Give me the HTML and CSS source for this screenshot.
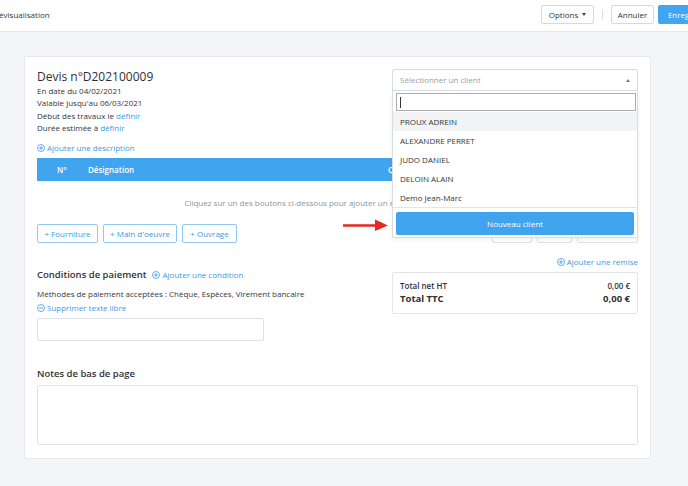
FILE: index.html
```html
<!DOCTYPE html>
<html lang="fr">
<head>
<meta charset="utf-8">
<title>Devis</title>
<link rel="stylesheet" href="styles.css">
</head>
<body>
<header class="topbar">
  <div class="topbar-title">Prévisualisation</div>
  <div class="topbar-actions">
    <button class="btn btn-options">Options <span class="caret"></span></button>
    <span class="vsep"></span>
    <button class="btn btn-cancel">Annuler</button>
    <button class="btn btn-primary">Enregistrer</button>
  </div>
</header>

<main class="page">
  <section class="card">
    <div class="doc-head">
      <div class="doc-info">
        <h1 class="doc-title">Devis n°D202100009</h1>
        <p>En date du 04/02/2021</p>
        <p>Valable jusqu'au 06/03/2021</p>
        <p>Début des travaux le <a class="link">définir</a></p>
        <p>Durée estimée à <a class="link">définir</a></p>
      </div>
      <div class="client-select">
        <div class="select-box"><span>Sélectionner un client</span><span class="caret-up"></span></div>
        <div class="dropdown">
          <div class="search-wrap"><div class="search-input"><span class="cursor"></span></div></div>
          <ul class="options">
            <li class="option active">PROUX ADREIN</li>
            <li class="option">ALEXANDRE PERRET</li>
            <li class="option">JUDO DANIEL</li>
            <li class="option">DELOIN ALAIN</li>
            <li class="option">Demo Jean-Marc</li>
          </ul>
          <div class="dropdown-foot"><button class="btn-new">Nouveau client</button></div>
        </div>
      </div>
    </div>

    <a class="link icon-link add-desc">
      <svg class="ico" viewBox="0 0 8 8"><circle cx="4" cy="4" r="3.5"/><path d="M4 2v4M2 4h4"/></svg>
      Ajouter une description
    </a>

    <div class="table-head">
      <span class="col-num">N°</span>
      <span class="col-des">Désignation</span>
      <span class="col-qty">Qté</span>
    </div>
    <div class="table-empty">Cliquez sur un des boutons ci-dessous pour ajouter un élément à votre document.</div>

    <div class="add-row">
      <div class="btn-group">
        <button class="btn-outline w-fourniture">+ Fourniture</button>
        <button class="btn-outline w-main">+ Main d'oeuvre</button>
        <button class="btn-outline w-ouvrage">+ Ouvrage</button>
      </div>
      <div class="btn-group">
        <button class="btn-outline w-a" aria-label="Titre"></button>
        <button class="btn-outline w-b" aria-label="Texte"></button>
        <button class="btn-outline w-c" aria-label="Saut de page"></button>
      </div>
    </div>

    <div class="bottom-row">
      <div class="conditions">
        <div class="cond-head">
          <h2 class="section-title">Conditions de paiement</h2>
          <a class="link icon-link">
            <svg class="ico" viewBox="0 0 8 8"><circle cx="4" cy="4" r="3.5"/><path d="M4 2v4M2 4h4"/></svg>
            Ajouter une condition
          </a>
        </div>
        <p class="methods">Méthodes de paiement acceptées : Chèque, Espèces, Virement bancaire</p>
        <a class="link icon-link remove-free">
          <svg class="ico" viewBox="0 0 8 8"><circle cx="4" cy="4" r="3.5"/><path d="M2 4h4"/></svg>
          Supprimer texte libre
        </a>
        <div class="free-input"></div>
      </div>
      <div class="totals-col">
        <a class="link icon-link remise">
          <svg class="ico" viewBox="0 0 8 8"><circle cx="4" cy="4" r="3.5"/><path d="M4 2v4M2 4h4"/></svg>
          Ajouter une remise
        </a>
        <div class="totals-box">
          <div class="tot-row tot-ht"><span>Total net HT</span><span>0,00 €</span></div>
          <div class="tot-row tot-ttc"><span>Total TTC</span><span>0,00 €</span></div>
        </div>
      </div>
    </div>

    <div class="notes">
      <h2 class="section-title">Notes de bas de page</h2>
      <div class="notes-area"></div>
    </div>
  </section>
</main>

<div class="annot-arrow">
  <svg width="46" height="12" viewBox="0 0 46 12"><path d="M0 6.5H34" stroke="#e8271d" stroke-width="2.4"/><polygon points="32,0.5 45,6.5 32,12" fill="#e8271d"/></svg>
</div>
</body>
</html>
```

FILE: styles.css
```css
* { box-sizing: border-box; margin: 0; padding: 0; }

html, body { width: 688px; height: 486px; overflow: hidden; }

body {
  position: relative;
  font-family: "Open Sans", "Noto Sans", sans-serif;
  font-size: 8px;
  line-height: 12px;
  color: #33363c;
  background: #f4f5f8;
}

button { font-family: inherit; cursor: pointer; }
ul { list-style: none; }

.link { color: #3b9ae6; text-decoration: none; }
.icon-link { display: flex; align-items: center; gap: 2px; }
.ico { width: 8px; height: 8px; fill: none; stroke: #3b9ae6; stroke-width: 0.8; flex: none; }

/* Top bar */
.topbar {
  height: 32px;
  background: #fff;
  border-bottom: 1px solid #e7e8ec;
  display: flex;
  justify-content: space-between;
  align-items: flex-start;
}
.topbar-title { margin: 9px 0 0 -9px; color: #333; }
.topbar-actions { display: flex; align-items: center; margin: 5px -31px 0 0; }
.btn {
  height: 19px;
  font-size: 8px;
  border-radius: 2px;
  border: 1px solid #d6d9df;
  background: #fff;
  color: #333;
  display: inline-flex;
  align-items: center;
  justify-content: center;
  gap: 4px;
}
.btn-options { width: 53px; }
.btn-cancel { width: 43px; }
.btn-primary { width: 61px; margin-left: 4px; background: #42a5f0; border-color: #42a5f0; color: #fff; }
.caret { width: 0; height: 0; border-left: 2.5px solid transparent; border-right: 2.5px solid transparent; border-top: 3px solid #444; }
.vsep { width: 1px; height: 9px; background: #d9dce1; margin: 0 8px; }

/* Page */
.page { padding: 24px 37px 0 24px; }
.card {
  background: #fff;
  border: 1px solid #e6e8ec;
  border-radius: 2px;
  padding: 12px 12px 13px 12px;
}

.doc-head { display: flex; justify-content: space-between; align-items: flex-start; }
.doc-title { font-size: 12px; line-height: 16px; font-weight: 400; color: #2f3136; }
.doc-info p { line-height: 12.3px; }

.client-select { position: relative; width: 246px; z-index: 2; }
.select-box {
  height: 22px;
  border: 1px solid #d9dce1;
  border-radius: 2px;
  padding: 0 7px;
  display: flex;
  align-items: center;
  justify-content: space-between;
  color: #9a9da4;
}
.caret-up { width: 0; height: 0; border-left: 2px solid transparent; border-right: 2px solid transparent; border-bottom: 3px solid #777; }

.dropdown {
  position: absolute;
  top: 21px;
  left: 0;
  width: 246px;
  background: #fff;
  border: 1px solid #d9dce1;
  box-shadow: 0 2px 4px rgba(0, 0, 0, 0.06);
}
.search-wrap { padding: 2px 1px 0 3px; }
.search-input { height: 18px; border: 1px solid #a9acb2; display: flex; align-items: center; padding-left: 3px; }
.cursor { width: 1px; height: 11px; background: #333; }
.options { margin-top: 1px; }
.option { height: 19px; line-height: 19px; padding-left: 7px; color: #33363c; }
.option.active { background: #f2f3f5; }
.dropdown-foot { border-top: 1px solid #e3e5e9; padding: 4px 3px 2px 3px; }
.btn-new {
  width: 100%;
  height: 23px;
  border: 0;
  border-radius: 2px;
  background: #40a3ee;
  color: #fff;
  font-size: 8px;
}

.add-desc { margin-top: 8px; }

.table-head {
  margin-top: 4px;
  height: 23px;
  background: #40a4ef;
  color: #fff;
  font-weight: 600;
  display: flex;
  align-items: center;
  padding-left: 20px;
}
.col-num { width: 31px; }
.col-des { width: 300px; }

.table-empty { height: 43px; padding-top: 16px; text-align: center; color: #8e93a0; }

.add-row { display: flex; justify-content: space-between; }
.btn-group { display: flex; gap: 5px; }
.btn-outline {
  height: 19px;
  font-size: 8px;
  padding: 0;
  border: 1px solid #90c8f4;
  border-radius: 2px;
  background: #fff;
  color: #3b9ae6;
}
.w-fourniture { width: 61px; }
.w-main { width: 74px; }
.w-ouvrage { width: 55px; }
.w-a { width: 40px; border-color: #dfe1e6; }
.w-b { width: 35px; border-color: #dfe1e6; }
.w-c { width: 61px; border-color: #dfe1e6; }

.bottom-row { margin-top: 13px; display: flex; justify-content: space-between; align-items: flex-start; }
.conditions { padding-top: 12px; }
.cond-head { display: flex; align-items: center; gap: 6px; }
.section-title { font-size: 9.5px; line-height: 14px; font-weight: 600; color: #333; }
.methods { margin-top: 6px; }
.remove-free { margin-top: 2px; }
.free-input { margin-top: 4px; width: 227px; height: 23px; border: 1px solid #dfe1e6; border-radius: 2px; }

.totals-col { width: 246px; }
.remise { justify-content: flex-end; }
.totals-box { margin-top: 4px; border: 1px solid #e3e5e9; border-radius: 2px; padding: 7px 7px; }
.tot-row { display: flex; justify-content: space-between; color: #2f3136; }
.tot-ht { line-height: 12px; font-weight: 600; }
.tot-ttc { line-height: 14px; font-size: 9.5px; font-weight: 700; }

.notes { margin-top: 26px; }
.notes-area { margin-top: 4px; height: 60px; border: 1px solid #e1e3e8; border-radius: 2px; }

/* annotation arrow overlay */
.annot-arrow { position: absolute; left: 343px; top: 219px; width: 46px; height: 12px; line-height: 0; }
```
